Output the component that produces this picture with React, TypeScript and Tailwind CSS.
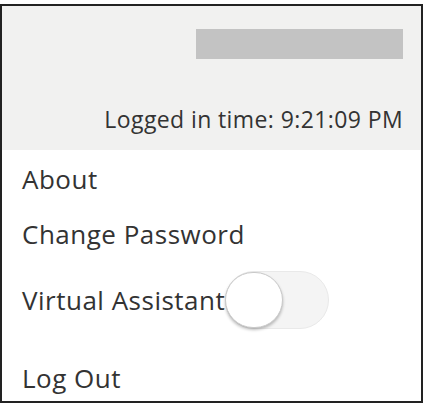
import React from 'react';

/**
 * Account flyout — header with user bar + logged-in time, then a short menu.
 */
export default function App() {
  return (
    <div className="h-[403px] w-[423px] overflow-hidden bg-white pt-[4px] font-['Open_Sans',sans-serif] text-[#333]">
      <div className="h-[399px] w-[423px] border-2 border-[#222] bg-white">
        {/* header */}
        <div className="flex h-[144px] flex-col items-end bg-[#f1f1f0] pr-[18px] pt-[23px]">
          <div className="h-[30px] w-[207px] bg-[#c3c3c3]" />
          <p className="mt-[45px] text-[23px] leading-[30px] tracking-[0.4px]">
            Logged in time: 9:21:09 PM
          </p>
        </div>

        {/* menu */}
        <div className="flex flex-col items-start pl-[20px] pt-[14px] text-[26px] leading-[30px] tracking-[0.5px]">
          <span>About</span>
          <span className="mt-[25px]">Change Password</span>
          <div className="mt-[22px] flex h-[58px] items-center">
            <span>Virtual Assistant</span>
            <div className="relative h-[58px] w-[104px] rounded-full border border-[#e9e9e9] bg-[#f4f4f4]">
              <div className="absolute left-[-1px] top-[0px] h-[56px] w-[58px] rounded-full border border-[#c9c9c9] bg-white shadow-[0_2px_3px_rgba(0,0,0,0.25)]" />
            </div>
          </div>
          <span className="mt-[34px]">Log Out</span>
        </div>
      </div>
    </div>
  );
}
